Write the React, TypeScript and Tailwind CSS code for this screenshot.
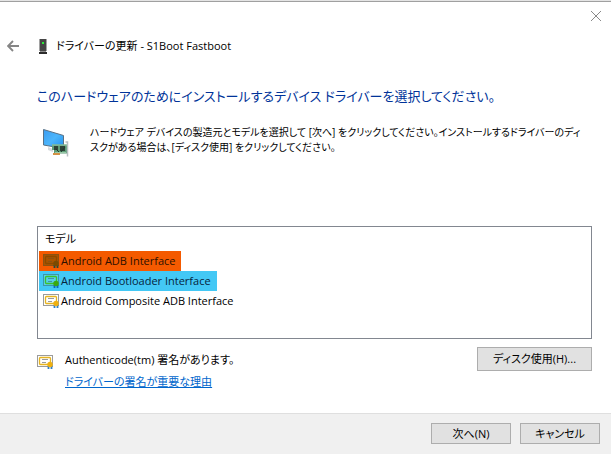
import { clsx } from "clsx";

interface Model {
  name: string;
  rowClass: string;
  frame: string;
  paper: string;
  accent: string;
  seal: string;
  ribbon: string;
}

const models: Model[] = [
  {
    name: "Android ADB Interface",
    rowClass: "bg-[#f45a00] text-[#2c1000]",
    frame: "#8a5212",
    paper: "#a85400",
    accent: "#8a4a00",
    seal: "#7a4a00",
    ribbon: "#204a40",
  },
  {
    name: "Android Bootloader Interface",
    rowClass: "bg-[#43c8f5] text-[#06243c]",
    frame: "#3d96a8",
    paper: "#55d0e8",
    accent: "#3fc02c",
    seal: "#3aa810",
    ribbon: "#0868c0",
  },
  {
    name: "Android Composite ADB Interface",
    rowClass: "text-black",
    frame: "#9b9b9b",
    paper: "#ffffff",
    accent: "#e6b422",
    seal: "#eeb010",
    ribbon: "#2f7fc8",
  },
];

type CertificateProps = Pick<Model, "frame" | "paper" | "accent" | "seal" | "ribbon">;

function CertificateIcon({ frame, paper, accent, seal, ribbon }: CertificateProps) {
  return (
    <svg width="16" height="14" viewBox="0 0 16 14" className="shrink-0" aria-hidden="true">
      <rect x="0.5" y="0.5" width="15" height="11" fill={paper} stroke={frame} />
      <rect x="2.5" y="2.5" width="11" height="7" rx="1" fill="none" stroke={accent} strokeWidth="1.3" />
      <path d="M5 4.500h6M5 7.500h4" stroke={frame} />
      <path d="M11.500 11v3M14.500 11v3" stroke={ribbon} strokeWidth="1.800" />
      <circle cx="13" cy="9.500" r="2.700" fill={seal} />
    </svg>
  );
}

function DeviceIcon() {
  return (
    <svg width="8" height="15" viewBox="0 0 8 15" className="shrink-0" aria-hidden="true">
      <path d="M0.500 0h7v12h-7z" fill="#454545" />
      <path d="M0 13h8v2H0z" fill="#2c2c2c" />
      <path d="M1 12.500h6" stroke="#8c8c8c" />
      <path d="M3 3h2v2H3z" fill="#2bec3a" />
    </svg>
  );
}

function HardwareIcon() {
  return (
    <svg width="27" height="28" viewBox="0 0 27 28" className="shrink-0" aria-hidden="true">
      <defs>
        <linearGradient id="screen" x1="0" y1="0" x2="1" y2="1">
          <stop offset="0" stopColor="#3b9cf0" />
          <stop offset="0.5" stopColor="#4cb5fb" />
          <stop offset="1" stopColor="#1f8fee" />
        </linearGradient>
      </defs>
      <path d="M5 18l5 2v3l-5-2z" fill="#d6dade" />
      <path d="M0.500 0.500L20.500 6.500v13L0.500 16z" fill="url(#screen)" stroke="#5b7184" />
      <path d="M9 15.500h15v9H11v-3.500H9z" fill="#5d9c77" />
      <path d="M9 16h15M12 23.500h11" stroke="#98c9a8" />
      <path d="M11 17h4v4h-4zM17 17h5v5h-5z" fill="#2e4238" />
      <path d="M13 20l3 3M18 23l4-5" stroke="#23362c" />
      <path d="M10 24h7v2h-7z" fill="#d39145" />
      <path d="M22.500 13H24.500V27.500" fill="none" stroke="#b9bec2" strokeWidth="1.500" />
    </svg>
  );
}

const buttonClass =
  "border border-[#adadad] bg-[#e1e1e1] text-center text-[11px] leading-4 text-black hover:border-[#0078d7] hover:bg-[#e5f1fb]";

export default function App() {
  return (
    <div className="flex min-h-screen flex-col border-t border-[#e4e4e4] bg-white font-['Open_Sans','Noto_Sans_CJK_JP',sans-serif] text-[11px] leading-4 text-black [font-feature-settings:'palt']">
      {/* Title bar */}
      <header className="border-t border-[#a0a0a0]">
        <div className="flex h-7 items-center justify-end pr-2.5">
          <button type="button" aria-label="閉じる" className="text-[#8a8a8a]">
            <svg width="10" height="10" viewBox="0 0 10 10" aria-hidden="true">
              <path d="M0 0l10 10M10 0L0 10" stroke="currentColor" />
            </svg>
          </button>
        </div>
        <div className="flex h-8 items-center pl-[7px]">
          <button type="button" aria-label="戻る" className="text-[#858585]">
            <svg width="12" height="12" viewBox="0 0 12 12" fill="none" aria-hidden="true">
              <path d="M12 6H1M6 1L1 6l5 5" stroke="currentColor" strokeWidth="1.900" />
            </svg>
          </button>
          <span className="ml-5 flex items-center gap-[9px]">
            <DeviceIcon />
            <span>ドライバーの更新 - S1Boot Fastboot</span>
          </span>
        </div>
      </header>

      {/* Wizard page */}
      <main className="flex-1 pr-[19px] pl-[37px]">
        <h1 className="pt-[22px] text-[13px] leading-6 text-[#003399]">
          このハードウェアのためにインストールするデバイス ドライバーを選択してください。
        </h1>

        <div className="mt-[17px] flex items-start gap-5 pl-1.5">
          <div className="pt-1">
            <HardwareIcon />
          </div>
          <p className="text-[10px] leading-[15px] whitespace-nowrap">
            ハードウェア デバイスの製造元とモデルを選択して [次へ] をクリックしてください。インストールするドライバーのディ
            <br />
            スクがある場合は、[ディスク使用] をクリックしてください。
          </p>
        </div>

        <div className="mt-[69px] h-[113px] border border-[#828790] pl-px">
          <table className="w-full border-collapse text-left">
            <thead>
              <tr>
                <th className="h-6 p-0 pl-1.5 font-normal">モデル</th>
              </tr>
            </thead>
            <tbody>
              {models.map(({ name, rowClass, ...icon }) => (
                <tr key={name}>
                  <td className="h-5 p-0">
                    <span className={clsx("flex h-5 w-fit items-center gap-0.5 pr-1.5 pl-1", rowClass)}>
                      <CertificateIcon {...icon} />
                      <span>{name}</span>
                    </span>
                  </td>
                </tr>
              ))}
            </tbody>
          </table>
        </div>

        <div className="mt-2 flex items-start">
          <div className="pt-2">
            <CertificateIcon frame="#9b9b9b" paper="#ffffff" accent="#e6b422" seal="#eeb010" ribbon="#2f7fc8" />
          </div>
          <div className="ml-3 flex-1 pt-0.5 leading-[22px]">
            <p>Authenticode(tm) 署名があります。</p>
            <a href="#signing" className="text-[#0066cc] underline">
              ドライバーの署名が重要な理由
            </a>
          </div>
          <button type="button" className={clsx(buttonClass, "h-6 w-[115px]")}>
            ディスク使用(H)...
          </button>
        </div>
      </main>

      {/* Navigation buttons */}
      <footer className="flex justify-end gap-[9px] border-t border-[#dfdfdf] bg-[#f0f0f0] pt-[9px] pr-[11px] pb-[10px]">
        <button type="button" className={clsx(buttonClass, "h-[21px] w-20")}>
          次へ(N)
        </button>
        <button type="button" className={clsx(buttonClass, "h-[21px] w-20")}>
          キャンセル
        </button>
      </footer>
    </div>
  );
}
